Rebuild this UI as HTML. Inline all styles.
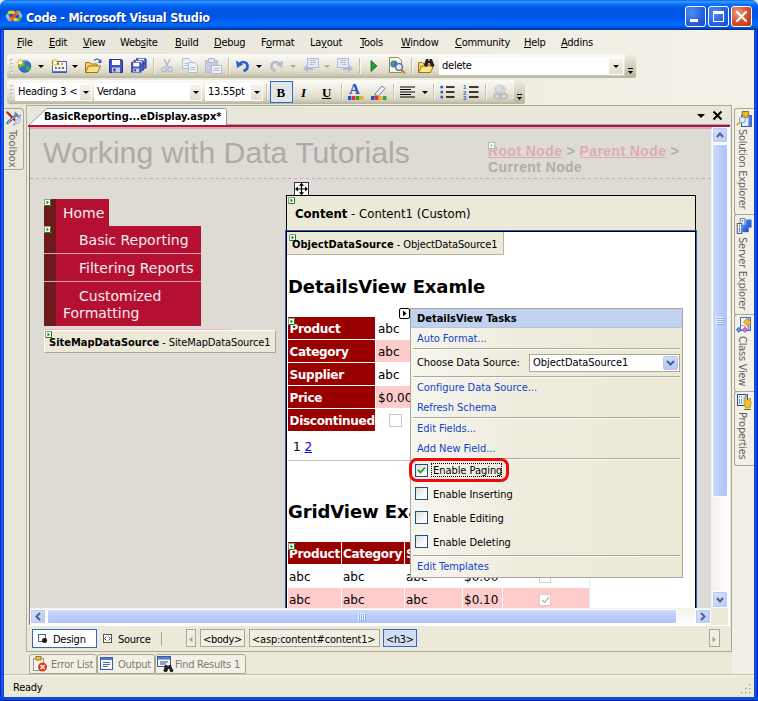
<!DOCTYPE html>
<html><head><meta charset="utf-8"><title>Code - Microsoft Visual Studio</title>
<style>
*{box-sizing:border-box}
html,body{margin:0;padding:0}
body{width:758px;height:701px;position:relative;overflow:hidden;background:#ece9d8;font:11px "DejaVu Sans Condensed","Liberation Sans",sans-serif;color:#000}
.a{position:absolute}
.t{position:absolute;white-space:pre;line-height:14px;letter-spacing:-0.25px}
.p{letter-spacing:-0.05px}
.vd{font-family:"DejaVu Sans","Liberation Sans",sans-serif}
.ar{font-family:"Liberation Sans",sans-serif}
u{text-decoration:underline}
/* title */
#title{left:0;top:0;width:758px;height:30px;border-radius:6px 6px 0 0;background:linear-gradient(to bottom,#0058e6 0%,#3a93ff 4%,#288eff 8%,#127dff 12%,#036ffc 16%,#0262ee 22%,#0057e5 30%,#0054e3 40%,#0055eb 56%,#005bf5 66%,#026afe 78%,#0062ef 86%,#0052d6 92%,#0040ab 96%,#003092 100%)}
#bl{left:0;top:30px;width:4px;height:671px;background:linear-gradient(to right,#0019cf,#0831d9 25%,#166aee 50%,#0855dd 75%,#0048dd)}
#br{left:754px;top:30px;width:4px;height:671px;background:linear-gradient(to right,#0048dd,#0855dd 25%,#0650d8 50%,#0831d9 75%,#00138c)}
#bb{left:0;top:697px;width:758px;height:4px;background:linear-gradient(to bottom,#0048dd,#0855dd 25%,#0650d8 50%,#0831d9 75%,#00138c)}
.cb{position:absolute;top:6px;width:21px;height:21px;border:1px solid #fff;border-radius:3px;background:radial-gradient(circle at 30% 30%,#4f8ff5 0%,#2b62e0 55%,#1a48c8 100%)}
#menubar{left:4px;top:30px;width:750px;height:76px;background:linear-gradient(to right,#e7e5d8,#f4f2e8)}
.tb{position:absolute;height:24px;border-radius:3px 3px 3px 3px;background:linear-gradient(to bottom,#fbfaf6 0%,#f0eee3 35%,#dddac8 75%,#c6c4ae 92%,#b3b19c 100%)}
.grip{position:absolute;left:3px;top:5px;width:3px;height:15px;background:repeating-linear-gradient(to bottom,#c1beaa 0,#c1beaa 2px,transparent 2px,transparent 4px)}
.grip:after{content:"";position:absolute;left:1px;top:1px;width:2px;height:15px;background:repeating-linear-gradient(to bottom,#fff 0,#fff 1px,transparent 1px,transparent 4px);opacity:.9}
.sep{position:absolute;width:1px;height:16px;background:#c2bfad;box-shadow:1px 0 0 rgba(255,255,255,.7)}
.combo{position:absolute;background:#fff;height:18px}
.dd{position:absolute;width:0;height:0;border-left:3px solid transparent;border-right:3px solid transparent;border-top:3px solid #000}
</style></head><body>
<!-- window chrome -->
<div class="a" id="title"></div>
<div class="a" id="bl"></div><div class="a" id="br"></div><div class="a" id="bb"></div>
<div class="t" style="left:26px;top:9px;font:bold 12.500px 'DejaVu Sans Condensed','Liberation Sans',sans-serif;color:#fff;text-shadow:1px 1px 0 #0a2a8a;line-height:17px;letter-spacing:-0.250px">Code - Microsoft Visual Studio</div>
<div class="a" id="menubar"></div>
<div class="t" style="left:17px;top:36px"><u>F</u>ile</div>
<div class="t" style="left:49px;top:36px"><u>E</u>dit</div>
<div class="t" style="left:83px;top:36px"><u>V</u>iew</div>
<div class="t" style="left:120px;top:36px">Web<u>s</u>ite</div>
<div class="t" style="left:175px;top:36px"><u>B</u>uild</div>
<div class="t" style="left:214px;top:36px"><u>D</u>ebug</div>
<div class="t" style="left:261px;top:36px">F<u>o</u>rmat</div>
<div class="t" style="left:310px;top:36px">La<u>y</u>out</div>
<div class="t" style="left:360px;top:36px"><u>T</u>ools</div>
<div class="t" style="left:401px;top:36px"><u>W</u>indow</div>
<div class="t" style="left:455px;top:36px"><u>C</u>ommunity</div>
<div class="t" style="left:524px;top:36px"><u>H</u>elp</div>
<div class="t" style="left:561px;top:36px"><u>A</u>ddins</div>
<div class="cb" style="left:685px"><div class="a" style="left:4px;top:12px;width:8px;height:3px;background:#fff"></div></div>
<div class="cb" style="left:708px"><div class="a" style="left:4px;top:4px;width:11px;height:11px;border:1px solid #fff;border-top-width:3px"></div></div>
<div class="cb" style="left:731px;background:radial-gradient(circle at 30% 30%,#f0a080 0%,#d8502c 50%,#b8340e 100%)"><svg class="a" style="left:3px;top:3px" width="13" height="13" viewBox="0 0 13 13"><path d="M2 2L11 11M11 2L2 11" stroke="#fff" stroke-width="2.2" stroke-linecap="round"/></svg></div>
<svg class="a" style="left:5px;top:10px" width="18" height="12" viewBox="5 10 18 12"><defs><linearGradient id="vx" x1="0" y1="1" x2="1" y2="0"><stop offset="0" stop-color="#f2801c"/><stop offset="0.5" stop-color="#e6401e"/><stop offset="1" stop-color="#f07a20"/></linearGradient></defs><g fill="none" stroke-linecap="round" stroke-width="3"><path d="M7.200 16L9.400 12.400" stroke="#62ae30"/><path d="M7.200 16L9.400 19.600" stroke="#9cc4e6"/><path d="M9.600 12.300H13.200L14.300 14" stroke="#f8cf20"/><path d="M18.600 19.700H15L13.900 18" stroke="#f8cf20"/><path d="M18.800 19.600L20.900 16" stroke="#62ae30"/><path d="M18.800 12.400L20.900 16" stroke="#86bce6"/><path d="M10.600 19.600L17.400 12.400" stroke="url(#vx)" stroke-width="3.400"/></g></svg>
<div class="tb" style="left:7px;top:54px;width:629px"><div class="grip"></div></div>
<div class="a" style="left:625px;top:54px;width:11px;height:24px;border-radius:0 3px 3px 0;background:linear-gradient(to bottom,#f0eee2,#b5b39c)"></div>
<svg class="a" style="left:627px;top:68px" width="7" height="7" viewBox="0 0 7 7"><path d="M1 0.5h5" stroke="#000" stroke-width="1"/><path d="M1 3h5L3.5 6z" fill="#000"/><path d="M2 1.5h5" stroke="#fff" stroke-width="0" /></svg>
<svg class="a" style="left:14px;top:56px" width="19" height="18" viewBox="0 0 19 18"><circle cx="10.800" cy="10.300" r="6.200" fill="#2f6fd6"/><circle cx="10.800" cy="10.300" r="6" fill="none" stroke="#1f4fa8" stroke-width="0.800"/><path d="M7 6.500c2-.5 3.500.5 4 2s-1 2.500-2.500 2.500-1 2.500-2.500 2-1.500-5 1-6.500zM13 9.500c1.500 0 2.500 1 3.500 2-.5 2-1.500 3-3.500 4 0-2-1.500-3-1-4.500z" fill="#3fae3a"/><path d="M9 5c1.500-.800 4-.800 5.500.800" stroke="#a8ccf8" stroke-width="1" fill="none"/><g transform="translate(2.5,2.5)"><path d="M4 0v8M0 4h8M1.200 1.200l5.600 5.600M6.800 1.200L1.200 6.800" stroke="#f0c020" stroke-width="1.200"/><rect x="2.500" y="2.500" width="3" height="3" fill="#fffbe0"/></g></svg>
<div class="dd" style="left:38px;top:65px"></div>
<svg class="a" style="left:48px;top:56px" width="20" height="18" viewBox="0 0 20 18"><rect x="4.500" y="5.500" width="14" height="11" fill="#f6f8fc" stroke="#4a6ab8"/><path d="M4.500 16h14" stroke="#3a5aa8" stroke-width="1.600"/><rect x="9" y="7" width="2" height="2" fill="#6a5ad8"/><rect x="13" y="7" width="2" height="2" fill="#f09a20"/><rect x="7" y="11" width="2" height="2" fill="#2a8ae0"/><rect x="10.500" y="11" width="2" height="2" fill="#e03a2a"/><rect x="14" y="11" width="2" height="2" fill="#2a9a3a"/><g transform="translate(3,2.5)"><path d="M4 0v8M0 4h8M1.200 1.200l5.600 5.600M6.800 1.200L1.200 6.800" stroke="#f0c020" stroke-width="1.200"/><rect x="2.500" y="2.500" width="3" height="3" fill="#fffbe0"/></g></svg>
<div class="dd" style="left:72px;top:65px"></div>
<svg class="a" style="left:84px;top:57px" width="18" height="17" viewBox="0 0 18 17"><path d="M1.5 15.5v-10h4l1.5 1.5h6v2" fill="#f5d36a" stroke="#9a7410"/><path d="M1.5 15.5l3-6.5h12l-3 6.5z" fill="#fbe28a" stroke="#9a7410"/><path d="M10 3.5c2-2 5-2 6 1" fill="none" stroke="#3a66c8" stroke-width="1.4"/><path d="M17.5 2v4h-4z" fill="#3a66c8"/></svg>
<svg class="a" style="left:109px;top:59px" width="14" height="14" viewBox="0 0 14 14"><path d="M0.5 0.5h12l1 1v12h-13z" fill="#3f55c8" stroke="#27348a"/><rect x="3" y="1" width="8" height="5" fill="#fff"/><rect x="3" y="8.5" width="8" height="5" fill="#c9cee6"/><rect x="4.5" y="9.5" width="2" height="3" fill="#27348a"/></svg>
<svg class="a" style="left:131px;top:58px" width="16" height="15" viewBox="0 0 16 15"><g transform="translate(5,0) scale(0.75)"><path d="M0.5 0.5h12l1 1v12h-13z" fill="#3f55c8" stroke="#27348a"/><rect x="3" y="1" width="8" height="5" fill="#fff"/><rect x="3" y="8.5" width="8" height="5" fill="#c9cee6"/><rect x="4.5" y="9.5" width="2" height="3" fill="#27348a"/></g><g transform="translate(2.5,2) scale(0.75)"><path d="M0.5 0.5h12l1 1v12h-13z" fill="#3f55c8" stroke="#27348a"/><rect x="3" y="1" width="8" height="5" fill="#fff"/><rect x="3" y="8.5" width="8" height="5" fill="#c9cee6"/><rect x="4.5" y="9.5" width="2" height="3" fill="#27348a"/></g><g transform="translate(0,4) scale(0.75)"><path d="M0.5 0.5h12l1 1v12h-13z" fill="#3f55c8" stroke="#27348a"/><rect x="3" y="1" width="8" height="5" fill="#fff"/><rect x="3" y="8.5" width="8" height="5" fill="#c9cee6"/><rect x="4.5" y="9.5" width="2" height="3" fill="#27348a"/></g></svg>
<div class="sep" style="left:153px;top:58px"></div>
<svg class="a" style="left:161px;top:59px" width="12" height="14" viewBox="0 0 12 14"><path d="M3 0l4 8M9 0L5 8" stroke="#b3bcd2" stroke-width="1.6" fill="none"/><circle cx="3" cy="10.5" r="2.2" fill="none" stroke="#b3bcd2" stroke-width="1.5"/><circle cx="9" cy="10.5" r="2.2" fill="none" stroke="#b3bcd2" stroke-width="1.5"/></svg>
<svg class="a" style="left:182px;top:58px" width="17" height="15" viewBox="0 0 17 15"><path d="M0.5 0.5h6l3 3v7h-9z" fill="#eef1f8" stroke="#b3bcd2"/><path d="M2.5 5.5h5M2.5 7.5h5" stroke="#b3bcd2"/><path d="M6.5 4.5h6l3 3v7h-9z" fill="#eef1f8" stroke="#b3bcd2"/><path d="M8.5 9.5h5M8.5 11.5h5" stroke="#b3bcd2"/></svg>
<svg class="a" style="left:205px;top:58px" width="17" height="16" viewBox="0 0 17 16"><rect x="0.5" y="2.5" width="12" height="12" fill="#c5cde0" stroke="#b3bcd2"/><rect x="3.5" y="0.5" width="6" height="4" fill="#dfe4f0" stroke="#b3bcd2"/><rect x="6.5" y="7.5" width="10" height="8" fill="#eef1f8" stroke="#b3bcd2"/><path d="M8.5 10.5h6M8.5 12.5h6" stroke="#b3bcd2"/></svg>
<div class="sep" style="left:228px;top:58px"></div>
<svg class="a" style="left:236px;top:59px" width="14" height="13" viewBox="0 0 14 13"><path d="M3 5.5c3-4 9-3 8.5 2.5-.3 2.5-2 3.5-4 4" fill="none" stroke="#2f5fd0" stroke-width="2.6"/><path d="M0 1.5l1 7.5 6-3.5z" fill="#2f5fd0"/></svg>
<div class="dd" style="left:256px;top:65px"></div>
<svg class="a" style="left:269px;top:59px" width="14" height="13" viewBox="0 0 14 13"><g transform="translate(14,0) scale(-1,1)"><path d="M3 5.5c3-4 9-3 8.5 2.5-.3 2.5-2 3.5-4 4" fill="none" stroke="#b3bcd2" stroke-width="2.6"/><path d="M0 1.5l1 7.5 6-3.5z" fill="#b3bcd2"/></g></svg>
<div class="dd" style="left:290px;top:65px;border-top-color:#aca899"></div>
<svg class="a" style="left:303px;top:58px" width="17" height="16" viewBox="0 0 17 16"><rect x="4.5" y="0.5" width="11" height="9" fill="#e6eaf4" stroke="#b3bcd2"/><path d="M7 2.500h6M7 4.500h6M7 6.500h4" stroke="#b3bcd2"/><path d="M0 10.5l5-4.5v3h5v3h-5v3z" fill="#b3bcd2"/></svg>
<div class="dd" style="left:324px;top:65px;border-top-color:#aca899"></div>
<svg class="a" style="left:336px;top:58px" width="17" height="16" viewBox="0 0 17 16"><g transform="translate(17,0) scale(-1,1)"><rect x="4.5" y="0.5" width="11" height="9" fill="#e6eaf4" stroke="#b3bcd2"/><path d="M7 2.500h6M7 4.500h6M7 6.500h4" stroke="#b3bcd2"/><path d="M0 10.5l5-4.5v3h5v3h-5v3z" fill="#b3bcd2"/></g></svg>
<div class="sep" style="left:359px;top:58px"></div>
<svg class="a" style="left:370px;top:60px" width="8" height="12" viewBox="0 0 8 12"><path d="M1 0.500l6 5.500-6 5.500z" fill="#2a9a2a" stroke="#1a6a1a" stroke-width="0.800"/></svg>
<svg class="a" style="left:388px;top:57px" width="18" height="18" viewBox="0 0 18 18"><path d="M1.5 0.5h9l3 3v12h-12z" fill="#fdf8d8" stroke="#8a8a6a"/><circle cx="6" cy="7" r="3.6" fill="#3a76d8"/><path d="M4 5c2 0 3 1 2 3s-2 1-2-3z" fill="#4ab04a"/><circle cx="11" cy="10" r="3.3" fill="#dff0ff" stroke="#4a6aa8" stroke-width="1.3"/><path d="M13.5 12.5l3.5 4" stroke="#c88a2a" stroke-width="2.2"/></svg>
<div class="sep" style="left:411px;top:58px"></div>
<svg class="a" style="left:417px;top:57px" width="18" height="17" viewBox="0 0 18 17"><path d="M1.5 15.5v-10h4l1.5 1.5h6v2" fill="#f5d36a" stroke="#9a7410"/><path d="M1.5 15.5l3-6.5h12l-3 6.5z" fill="#fbe28a" stroke="#9a7410"/><path d="M9 2h2.5v2h1V2H15l2 6h-3.5l-.5-2h-2l-.5 2H7z" fill="#222"/><circle cx="9" cy="8" r="1.8" fill="#222"/><circle cx="15.5" cy="8" r="1.8" fill="#222"/></svg>
<div class="combo" style="left:439px;top:57px;width:185px"></div>
<div class="a" style="left:609px;top:58px;width:14px;height:16px;background:linear-gradient(to bottom,#f7f6f0,#e0ddcc)"></div>
<div class="dd" style="left:613px;top:65px"></div>
<div class="t" style="left:442px;top:59px">delete</div>
<!-- toolbar 2 -->
<div class="tb" style="left:7px;top:80px;width:518px"><div class="grip"></div></div>
<div class="a" style="left:514px;top:80px;width:11px;height:24px;border-radius:0 3px 3px 0;background:linear-gradient(to bottom,#f0eee2,#b5b39c)"></div>
<svg class="a" style="left:516px;top:94px" width="7" height="7" viewBox="0 0 7 7"><path d="M1 0.5h5" stroke="#000" stroke-width="1"/><path d="M1 3h5L3.5 6z" fill="#000"/></svg>
<div class="combo" style="left:15px;top:83px;width:77px"></div>
<div class="a" style="left:80px;top:84px;width:11px;height:16px;background:linear-gradient(to bottom,#f7f6f0,#e0ddcc)"></div>
<div class="dd" style="left:83px;top:91px"></div>
<div class="t" style="left:18px;top:85px">Heading 3 &lt;</div>
<div class="combo" style="left:94px;top:83px;width:108px"></div>
<div class="a" style="left:190px;top:84px;width:11px;height:16px;background:linear-gradient(to bottom,#f7f6f0,#e0ddcc)"></div>
<div class="dd" style="left:193px;top:91px"></div>
<div class="t" style="left:97px;top:85px">Verdana</div>
<div class="combo" style="left:205px;top:83px;width:58px"></div>
<div class="a" style="left:251px;top:84px;width:11px;height:16px;background:linear-gradient(to bottom,#f7f6f0,#e0ddcc)"></div>
<div class="dd" style="left:254px;top:91px"></div>
<div class="t" style="left:208px;top:85px">13.55pt</div>
<div class="sep" style="left:266px;top:84px"></div>
<div class="a" style="left:270px;top:81px;width:23px;height:22px;border:1px solid #316ac5;background:#e1e6e8"></div>
<div class="t" style="left:276.500px;top:84px;font:bold 13px 'Liberation Serif',serif;line-height:17px">B</div>
<div class="t" style="left:301px;top:84px;font:italic bold 13px 'Liberation Serif',serif;line-height:17px">I</div>
<div class="t" style="left:322px;top:84px;font:bold 13px 'Liberation Serif',serif;line-height:17px;text-decoration:underline">U</div>
<div class="sep" style="left:341px;top:84px"></div>
<div class="t" style="left:349px;top:80px;font:bold 15px 'Liberation Serif',serif;line-height:18px;color:#2a4fc0">A</div>
<svg class="a" style="left:348px;top:84px" width="16" height="16" viewBox="0 0 16 16"><rect x="0" y="12" width="3.4" height="4" fill="#2a4fc0"/><rect x="4" y="12" width="3.4" height="4" fill="#e03030"/><rect x="8" y="12" width="3.4" height="4" fill="#30a030"/><rect x="12" y="12" width="3.4" height="4" fill="#f0b020"/></svg>
<svg class="a" style="left:371px;top:84px" width="16" height="16" viewBox="0 0 16 16"><path d="M4 10l7-8 3 2.5-7 8z" fill="#f4f4f8" stroke="#6a7ab0" stroke-width="1"/><path d="M4 10l3 2.5-4 1z" fill="#e8c020" stroke="#8a7a30" stroke-width="0.6"/><rect x="0" y="12" width="3.4" height="4" fill="#2a4fc0"/><rect x="4" y="12" width="3.4" height="4" fill="#e03030"/><rect x="8" y="12" width="3.4" height="4" fill="#f0b020"/><rect x="12" y="12" width="3.4" height="4" fill="#30a030"/></svg>
<div class="sep" style="left:393px;top:84px"></div>
<svg class="a" style="left:400px;top:86px" width="16" height="12" viewBox="0 0 16 12"><path d="M0 1h15M0 3.5h11M0 6h15M0 8.5h11M0 11h15" stroke="#000" stroke-width="1.2"/></svg>
<div class="dd" style="left:422px;top:91px"></div>
<div class="sep" style="left:433px;top:84px"></div>
<svg class="a" style="left:440px;top:85px" width="15" height="14" viewBox="0 0 15 14"><circle cx="1.8" cy="2" r="1.6" fill="#2f5fd0"/><circle cx="1.8" cy="7" r="1.6" fill="#2f5fd0"/><circle cx="1.8" cy="12" r="1.6" fill="#2f5fd0"/><path d="M6 2h8.5M6 7h8.5M6 12h8.5" stroke="#000" stroke-width="1.3"/></svg>
<svg class="a" style="left:463px;top:84px" width="17" height="16" viewBox="0 0 17 16"><text x="0" y="5" font-family="Liberation Sans" font-size="6" font-weight="bold" fill="#2f5fd0">1</text><text x="0" y="10.5" font-family="Liberation Sans" font-size="6" font-weight="bold" fill="#2f5fd0">2</text><text x="0" y="16" font-family="Liberation Sans" font-size="6" font-weight="bold" fill="#2f5fd0">3</text><path d="M6 3h9.5M6 8h9.5M6 13h9.5" stroke="#000" stroke-width="1.3"/></svg>
<div class="sep" style="left:485px;top:84px"></div>
<svg class="a" style="left:492px;top:84px" width="18" height="17" viewBox="0 0 18 17"><circle cx="8" cy="6.5" r="6" fill="#cfd2d9"/><circle cx="6.5" cy="4.5" r="2.5" fill="#dcdfe6"/><rect x="2" y="10" width="7" height="4.5" rx="2" fill="none" stroke="#b6bac4" stroke-width="1.6"/><rect x="8" y="10" width="7" height="4.5" rx="2" fill="none" stroke="#b6bac4" stroke-width="1.6"/></svg>
<!-- document frame -->
<div class="a" style="left:4px;top:108px;width:20px;height:62px;background:#eae9dc;border:1px solid #aca899;border-left:none;border-radius:0 4px 3px 0"></div>
<svg class="a" style="left:6px;top:111px" width="16" height="16" viewBox="0 0 16 16"><path d="M1.400 1.400L8.600 9" stroke="#c41c1c" stroke-width="2.200" stroke-linecap="round"/><path d="M1.800 11.800L10.600 3.800" stroke="#3a5688" stroke-width="2.600" stroke-linecap="round"/><path d="M1.800 11.800L10.600 3.800" stroke="#fff" stroke-width="1.100" stroke-dasharray="1.200 0.800"/><path d="M10 1.200a2.600 2.600 0 1 0 4.400 2.400" fill="none" stroke="#6f8cc2" stroke-width="1.700"/><path d="M9.600 9.500l3-1.500 1.200-2.500 .600 3-1.600 3.500-2.800 1z" fill="#d8def0" stroke="#94a4cc" stroke-width="0.800"/><path d="M7 14.500l2.600-2.200" stroke="#8ea2d0" stroke-width="1.600"/></svg>
<div class="t" style="left:19px;top:130px;transform-origin:0 0;transform:rotate(90deg);font-size:11px;color:#6a6a6a;letter-spacing:0.1px">Toolbox</div>
<div class="a" style="left:27px;top:106px;width:705px;height:19px;background:#e9e7da"></div>
<svg class="a" style="left:28px;top:108px" width="200" height="18" viewBox="0 0 200 18"><path d="M0.500 17.500L17.500 1.500Q18.500 0.500 20 0.500H196.500Q198.500 0.500 198.500 2.500V17.500" fill="#fff" stroke="#7f9db9"/></svg>
<div class="t" style="left:44px;top:110px;font-weight:bold;letter-spacing:0">BasicReporting...eDisplay.aspx*</div>
<div class="dd" style="left:697px;top:114px;border-width:4px 4px 0 4px"></div>
<svg class="a" style="left:712px;top:110px" width="11" height="11" viewBox="0 0 11 11"><path d="M1.500 1.500l8 8M9.500 1.500l-8 8" stroke="#000" stroke-width="2"/></svg>
<div class="a" style="left:227px;top:124px;width:503px;height:1px;background:#8fa9c6"></div>
<div class="a" style="left:28px;top:125px;width:702px;height:2px;background:#b5123a"></div>
<div class="a" style="left:30px;top:127px;width:682px;height:2px;background:#dbadb1;z-index:1"></div>
<div class="a" id="page" style="left:28px;top:128px;width:684px;height:481px;background:#dddbd4;border-left:1px solid #f0eee3;overflow:hidden">
<div class="t ar" style="left:14px;top:6px;font-size:30.200px;line-height:37px;color:#aeaba4;letter-spacing:0">Working with Data Tutorials</div>
<div class="t ar" style="left:459px;top:15px;font-size:14px;font-weight:bold;line-height:16px;color:#b1aea7;letter-spacing:0.4px"><span style="color:#dfacb3;text-decoration:underline">Root Node</span> &gt; <span style="color:#dfacb3;text-decoration:underline">Parent Node</span> &gt;
Current Node</div>
<svg class="a" style="left:459px;top:14px" width="7" height="7" viewBox="0 0 7 7"><rect x="0.5" y="0.5" width="6" height="6" fill="#fff" stroke="#9ac89a"/><path d="M2.500 1.500l2.500 2-2.500 2z" fill="#9ac89a"/></svg>
<div class="a" style="left:0px;top:50px;width:684px;height:1px;background:repeating-linear-gradient(to right,#dba5af 0,#dba5af 3px,transparent 3px,transparent 6px);background-position:1px 0"></div>
<div class="a" style="left:15px;top:71px;width:65px;height:27px;background:#b51032"></div>
<div class="a" style="left:15px;top:98px;width:157px;height:100px;background:#b51032"></div>
<div class="a" style="left:15px;top:71px;width:12px;height:127px;background:#6e1a1c"></div>
<div class="a" style="left:15px;top:125px;width:157px;height:1px;background:#e6a3ab"></div>
<div class="a" style="left:15px;top:153px;width:157px;height:1px;background:#e6a3ab"></div>
<div class="t vd" style="left:34px;top:77px;font-size:14px;line-height:17px;color:#f4eef0;letter-spacing:0">Home</div>
<div class="t vd" style="left:50px;top:104px;font-size:14px;line-height:17px;color:#f4eef0;letter-spacing:0">Basic Reporting</div>
<div class="t vd" style="left:50px;top:132px;font-size:14px;line-height:17px;color:#f4eef0;letter-spacing:0">Filtering Reports</div>
<div class="t vd" style="left:50px;top:160px;font-size:14px;line-height:17px;color:#f4eef0;letter-spacing:0">Customized</div>
<div class="t vd" style="left:34px;top:177px;font-size:14px;line-height:17px;color:#f4eef0;letter-spacing:0">Formatting</div>
<svg class="a" style="left:15px;top:71px" width="7" height="7" viewBox="0 0 7 7"><rect width="7" height="7" fill="#fff"/><path d="M0.500 7V0.500H7" fill="none" stroke="#8c9a8c"/><path d="M1 6.500H6.500V1" fill="none" stroke="#0a8a0a"/><path d="M2.500 1.500l2.500 2-2.500 2z" fill="#0a8a0a"/></svg>
<svg class="a" style="left:15px;top:98px" width="7" height="7" viewBox="0 0 7 7"><rect width="7" height="7" fill="#fff"/><path d="M0.500 7V0.500H7" fill="none" stroke="#8c9a8c"/><path d="M1 6.500H6.500V1" fill="none" stroke="#0a8a0a"/><path d="M2.500 1.500l2.500 2-2.500 2z" fill="#0a8a0a"/></svg>
<div class="a" style="left:15px;top:201px;width:187px;height:1px;background:#f2b8c0"></div>
<div class="a" style="left:15px;top:202px;width:232px;height:23px;background:#ece9d8;border:1px solid #aca899;border-top-color:#fff;border-left-color:#fff"></div>
<div class="t" style="left:20px;top:208px;letter-spacing:0"><b>SiteMapDataSource</b><span style="letter-spacing:-0.12px"> - SiteMapDataSource1</span></div>
<svg class="a" style="left:16px;top:203px" width="7" height="7" viewBox="0 0 7 7"><rect width="7" height="7" fill="#fff"/><path d="M0.500 7V0.500H7" fill="none" stroke="#8c9a8c"/><path d="M1 6.500H6.500V1" fill="none" stroke="#0a8a0a"/><path d="M2.500 1.500l2.500 2-2.500 2z" fill="#0a8a0a"/></svg>
<!-- content placeholder -->
<svg class="a" style="left:265px;top:54px" width="15" height="14" viewBox="0 0 15 14"><rect x="0.5" y="0.5" width="14" height="13" fill="#fff" stroke="#333"/><path d="M7.500 2v10M2 7h11" stroke="#000" stroke-width="1.200"/><path d="M7.500 0.800l2.600 3h-5.200zM7.500 13.200l2.600-3h-5.200zM1 7l3-2.600v5.200zM14 7l-3-2.600v5.200z" fill="#000"/></svg>
<div class="a" style="left:257px;top:67px;width:410px;height:35px;background:#ece9d8;border:1px solid #000;border-bottom:none"></div>
<svg class="a" style="left:259px;top:69px" width="7" height="7" viewBox="0 0 7 7"><rect width="7" height="7" fill="#fff"/><path d="M0.500 7V0.500H7" fill="none" stroke="#8c9a8c"/><path d="M1 6.500H6.500V1" fill="none" stroke="#0a8a0a"/><path d="M2.500 1.500l2.500 2-2.500 2z" fill="#0a8a0a"/></svg>
<div class="t" style="left:266px;top:78px;font-size:13px;line-height:16px;letter-spacing:0"><b>Content</b> - Content1 (Custom)</div>
<div class="a" style="left:256px;top:102px;width:412px;height:400px;background:#fff;border:1px solid #2a58c4"></div>
<div class="a" style="left:257px;top:103px;width:410px;height:400px;border:1px solid #000;border-bottom:none"></div>
<div class="a" style="left:258px;top:104px;width:217px;height:23px;background:#ece9d8;border:1px solid #b8b5a5;border-left:none;border-top:none"></div>
<svg class="a" style="left:260px;top:106px" width="7" height="7" viewBox="0 0 7 7"><rect width="7" height="7" fill="#fff"/><path d="M0.500 7V0.500H7" fill="none" stroke="#8c9a8c"/><path d="M1 6.500H6.500V1" fill="none" stroke="#0a8a0a"/><path d="M2.500 1.500l2.500 2-2.500 2z" fill="#0a8a0a"/></svg>
<div class="t" style="left:263px;top:110px;letter-spacing:0.05px"><b>ObjectDataSource</b><span style="letter-spacing:-0.12px"> - ObjectDataSource1</span></div>
<div class="t vd" style="left:259px;top:148px;font-size:18px;font-weight:bold;line-height:22px;letter-spacing:-0.1px">DetailsView Examle</div>
<div class="t vd" style="left:259px;top:373px;font-size:18px;font-weight:bold;line-height:22px;letter-spacing:-0.1px">GridView Example</div>
<div class="a" style="left:259px;top:189px;width:87px;height:22px;background:#990000"></div>
<div class="a" style="left:347px;top:189px;width:40px;height:22px;background:#fff"></div>
<div class="t vd" style="left:260.5px;top:193px;font-size:12px;font-weight:bold;color:#fff;line-height:16px;letter-spacing:-0.3px">Product</div>
<div class="t vd" style="left:349.0px;top:193px;font-size:12px;line-height:16px;letter-spacing:0">abc</div>
<div class="a" style="left:259px;top:212px;width:87px;height:22px;background:#990000"></div>
<div class="a" style="left:347px;top:212px;width:40px;height:22px;background:#ffcccc"></div>
<div class="t vd" style="left:260.5px;top:216px;font-size:12px;font-weight:bold;color:#fff;line-height:16px;letter-spacing:-0.3px">Category</div>
<div class="t vd" style="left:349.0px;top:216px;font-size:12px;line-height:16px;letter-spacing:0">abc</div>
<div class="a" style="left:259px;top:235px;width:87px;height:22px;background:#990000"></div>
<div class="a" style="left:347px;top:235px;width:40px;height:22px;background:#fff"></div>
<div class="t vd" style="left:260.5px;top:239px;font-size:12px;font-weight:bold;color:#fff;line-height:16px;letter-spacing:-0.3px">Supplier</div>
<div class="t vd" style="left:349.0px;top:239px;font-size:12px;line-height:16px;letter-spacing:0">abc</div>
<div class="a" style="left:259px;top:258px;width:87px;height:22px;background:#990000"></div>
<div class="a" style="left:347px;top:258px;width:40px;height:22px;background:#ffcccc"></div>
<div class="t vd" style="left:260.5px;top:262px;font-size:12px;font-weight:bold;color:#fff;line-height:16px;letter-spacing:-0.3px">Price</div>
<div class="t vd" style="left:349.0px;top:262px;font-size:12px;line-height:16px;letter-spacing:0">$0.00</div>
<div class="a" style="left:259px;top:281px;width:87px;height:22px;background:#990000"></div>
<div class="a" style="left:347px;top:281px;width:40px;height:22px;background:#fff"></div>
<div class="t vd" style="left:260.5px;top:285px;font-size:12px;font-weight:bold;color:#fff;line-height:16px;letter-spacing:-0.3px">Discontinued</div>
<div class="a" style="left:360px;top:286px;width:13px;height:13px;background:#fff;border:1px solid #c8c8c0"></div>
<svg class="a" style="left:259px;top:190px" width="7" height="7" viewBox="0 0 7 7"><rect width="7" height="7" fill="#fff"/><path d="M0.500 7V0.500H7" fill="none" stroke="#8c9a8c"/><path d="M1 6.500H6.500V1" fill="none" stroke="#0a8a0a"/><path d="M2.500 1.500l2.500 2-2.500 2z" fill="#0a8a0a"/></svg>
<div class="t vd" style="left:264px;top:311px;font-size:12px;line-height:16px;letter-spacing:0">1 <span style="color:#0000ee;text-decoration:underline">2</span></div>
<div class="a" style="left:259px;top:332px;width:125px;height:1px;background:#c0c0c0"></div>
<!-- gridview -->
<div class="a" style="left:259px;top:414px;width:53px;height:22px;background:#990000"></div>
<div class="t vd" style="left:260px;top:418px;font-size:12px;font-weight:bold;color:#fff;line-height:16px;letter-spacing:-0.3px">Product</div>
<div class="a" style="left:313px;top:414px;width:62px;height:22px;background:#990000"></div>
<div class="t vd" style="left:314px;top:418px;font-size:12px;font-weight:bold;color:#fff;line-height:16px;letter-spacing:-0.3px">Category</div>
<div class="a" style="left:376px;top:414px;width:57px;height:22px;background:#990000"></div>
<div class="t vd" style="left:377px;top:418px;font-size:12px;font-weight:bold;color:#fff;line-height:16px;letter-spacing:-0.3px">Supplier</div>
<div class="a" style="left:434px;top:414px;width:39px;height:22px;background:#990000"></div>
<div class="t vd" style="left:435px;top:418px;font-size:12px;font-weight:bold;color:#fff;line-height:16px;letter-spacing:-0.3px">Price</div>
<div class="a" style="left:474px;top:414px;width:86px;height:22px;background:#990000"></div>
<div class="a" style="left:259px;top:437px;width:53px;height:22px;background:#fff"></div>
<div class="t vd" style="left:260px;top:441px;font-size:12px;line-height:16px;letter-spacing:0">abc</div>
<div class="a" style="left:313px;top:437px;width:62px;height:22px;background:#fff"></div>
<div class="t vd" style="left:314px;top:441px;font-size:12px;line-height:16px;letter-spacing:0">abc</div>
<div class="a" style="left:376px;top:437px;width:57px;height:22px;background:#fff"></div>
<div class="t vd" style="left:377px;top:441px;font-size:12px;line-height:16px;letter-spacing:0">abc</div>
<div class="a" style="left:434px;top:437px;width:39px;height:22px;background:#fff"></div>
<div class="t vd" style="left:435px;top:441px;font-size:12px;line-height:16px;letter-spacing:0">$0.00</div>
<div class="a" style="left:474px;top:437px;width:86px;height:22px;background:#fff"></div>
<div class="a" style="left:259px;top:460px;width:53px;height:22px;background:#ffcccc"></div>
<div class="t vd" style="left:260px;top:464px;font-size:12px;line-height:16px;letter-spacing:0">abc</div>
<div class="a" style="left:313px;top:460px;width:62px;height:22px;background:#ffcccc"></div>
<div class="t vd" style="left:314px;top:464px;font-size:12px;line-height:16px;letter-spacing:0">abc</div>
<div class="a" style="left:376px;top:460px;width:57px;height:22px;background:#ffcccc"></div>
<div class="t vd" style="left:377px;top:464px;font-size:12px;line-height:16px;letter-spacing:0">abc</div>
<div class="a" style="left:434px;top:460px;width:39px;height:22px;background:#ffcccc"></div>
<div class="t vd" style="left:435px;top:464px;font-size:12px;line-height:16px;letter-spacing:0">$0.10</div>
<div class="a" style="left:474px;top:460px;width:86px;height:22px;background:#ffcccc"></div>
<div class="a" style="left:258px;top:414px;width:303px;height:70px;border:1px solid #e8e8e8;border-width:0 1px 0 0"></div>
<div class="a" style="left:510px;top:443px;width:12px;height:12px;background:#fff;border:1px solid #d0d0c8"></div>
<div class="a" style="left:510px;top:466px;width:12px;height:12px;background:#fff;border:1px solid #d0d0c8"></div>
<svg class="a" style="left:512px;top:468px" width="9" height="9" viewBox="0 0 9 9"><path d="M1 4l2.500 2.500L8 1.500" fill="none" stroke="#b8b8b0" stroke-width="1.4"/></svg>
<svg class="a" style="left:259px;top:415px" width="7" height="7" viewBox="0 0 7 7"><rect width="7" height="7" fill="#fff"/><path d="M0.500 7V0.500H7" fill="none" stroke="#8c9a8c"/><path d="M1 6.500H6.500V1" fill="none" stroke="#0a8a0a"/><path d="M2.500 1.500l2.500 2-2.500 2z" fill="#0a8a0a"/></svg>
<!-- tasks panel -->
<svg class="a" style="left:370px;top:180px" width="11" height="11" viewBox="0 0 11 11"><rect x="0.5" y="0.5" width="10" height="10" rx="1.500" fill="#fff" stroke="#000"/><path d="M4 2.500l3.500 3-3.500 3z" fill="#000"/></svg>
<div class="a" style="left:381px;top:180px;width:273px;height:270px;border:1px solid #aca899;background:linear-gradient(to right,#f7f6ee 0%,#efecde 40%,#ebe8d6 100%)"></div>
<div class="a" style="left:382px;top:181px;width:271px;height:18px;background:#c1d2ee"></div>
<div class="a" style="left:382px;top:199px;width:271px;height:1px;background:#b5c4e0"></div>
<div class="t p" style="left:388px;top:184px;font-weight:bold;letter-spacing:0">DetailsView Tasks</div>
<div class="t p" style="left:388px;top:204px;color:#1144cc">Auto Format...</div>
<div class="a" style="left:384px;top:220px;width:267px;height:1px;background:#aca899"></div><div class="a" style="left:384px;top:221px;width:267px;height:1px;background:#fbfaf5"></div>
<div class="t p" style="left:388px;top:228px;">Choose Data Source:</div>
<div class="a" style="left:500px;top:226px;width:151px;height:18px;background:#fff;border:1px solid #aca899"></div>
<div class="t p" style="left:504px;top:228px;">ObjectDataSource1</div>
<div class="a" style="left:634px;top:228px;width:15px;height:14px;border-radius:2px;background:linear-gradient(to bottom,#cfdcf8,#b3c8f4);border:1px solid #b8c8ee"></div>
<svg class="a" style="left:637px;top:232px" width="9" height="6" viewBox="0 0 9 6"><path d="M1 1l3.500 3.500L8 1" fill="none" stroke="#4d6185" stroke-width="2"/></svg>
<div class="a" style="left:384px;top:248px;width:267px;height:1px;background:#aca899"></div><div class="a" style="left:384px;top:249px;width:267px;height:1px;background:#fbfaf5"></div>
<div class="t p" style="left:388px;top:253px;color:#1144cc">Configure Data Source...</div>
<div class="t p" style="left:388px;top:273px;color:#1144cc">Refresh Schema</div>
<div class="a" style="left:384px;top:289px;width:267px;height:1px;background:#aca899"></div><div class="a" style="left:384px;top:290px;width:267px;height:1px;background:#fbfaf5"></div>
<div class="t p" style="left:388px;top:294px;color:#1144cc">Edit Fields...</div>
<div class="t p" style="left:388px;top:314px;color:#1144cc">Add New Field...</div>
<div class="a" style="left:384px;top:330px;width:267px;height:1px;background:#aca899"></div><div class="a" style="left:384px;top:331px;width:267px;height:1px;background:#fbfaf5"></div>
<div class="a" style="left:386px;top:336px;width:13px;height:13px;background:linear-gradient(135deg,#dcdcd6,#fff 80%);border:1px solid #1c5180"></div>
<svg class="a" style="left:388px;top:338px" width="9" height="9" viewBox="0 0 9 9"><path d="M1 4l2.500 2.500L8 1.500" fill="none" stroke="#21a121" stroke-width="1.8"/></svg>
<div class="t p" style="left:404px;top:336px;">Enable Paging</div>
<div class="a" style="left:402px;top:335px;width:71px;height:14px;border:1px dotted #000"></div>
<div class="a" style="left:380px;top:330px;width:100px;height:24px;border:3px solid #ee0a0a;border-radius:8px"></div>
<div class="a" style="left:386px;top:359px;width:13px;height:13px;background:linear-gradient(135deg,#dcdcd6,#fff 80%);border:1px solid #1c5180"></div>
<div class="t p" style="left:404px;top:360px;">Enable Inserting</div>
<div class="a" style="left:386px;top:383px;width:13px;height:13px;background:linear-gradient(135deg,#dcdcd6,#fff 80%);border:1px solid #1c5180"></div>
<div class="t p" style="left:404px;top:384px;">Enable Editing</div>
<div class="a" style="left:386px;top:407px;width:13px;height:13px;background:linear-gradient(135deg,#dcdcd6,#fff 80%);border:1px solid #1c5180"></div>
<div class="t p" style="left:404px;top:408px;">Enable Deleting</div>
<div class="a" style="left:384px;top:427px;width:267px;height:1px;background:#aca899"></div><div class="a" style="left:384px;top:428px;width:267px;height:1px;background:#fbfaf5"></div>
<div class="t p" style="left:388px;top:432px;color:#1144cc">Edit Templates</div>
<!--PAGE_END--></div>
<div class="a" style="left:26px;top:106px;width:1px;height:546px;background:#b4b1a1"></div>
<div class="a" style="left:731px;top:106px;width:1px;height:546px;background:#aca899"></div>
<div class="a" style="left:26px;top:651px;width:706px;height:1px;background:#aca899"></div>
<div class="a" style="left:29px;top:127px;width:1px;height:498px;background:#7d7a6c"></div>
<div class="a" style="left:4px;top:106px;width:22px;height:568px;background:#e7e6d9;z-index:-1"></div>
<div class="a" style="left:26px;top:105px;width:706px;height:1px;background:#aca899"></div>
<!-- scrollbars -->
<div class="a" style="left:711px;top:127px;width:17px;height:481px;background:linear-gradient(to right,#f3f1ec,#fefefb)"></div>
<div class="a" style="left:712px;top:127px;width:16px;height:16px;border:1px solid #fff;border-radius:2px;background:linear-gradient(135deg,#d6e2fc,#b6c9f6);box-shadow:inset 0 0 0 1px #b8c9f3"></div>
<svg class="a" style="left:716px;top:132px" width="8" height="6" viewBox="0 0 8 6"><path d="M1 5l3-3.500 3 3.500" fill="none" stroke="#4d6185" stroke-width="2"/></svg>
<div class="a" style="left:712px;top:144px;width:16px;height:353px;border:1px solid #fff;border-radius:2px;background:linear-gradient(to right,#cbdaff,#bbcdfa 50%,#b0c4f6)"></div>
<svg class="a" style="left:716px;top:317px" width="8" height="8" viewBox="0 0 8 8"><path d="M0 0.500h7M0 2.500h7M0 4.500h7M0 6.500h7" stroke="#eef4fe"/><path d="M1 1.500h7M1 3.500h7M1 5.500h7M1 7.500h7" stroke="#8cb0f8"/></svg>
<div class="a" style="left:712px;top:591px;width:16px;height:17px;border:1px solid #fff;border-radius:2px;background:linear-gradient(135deg,#d6e2fc,#b6c9f6);box-shadow:inset 0 0 0 1px #b8c9f3"></div>
<svg class="a" style="left:716px;top:597px" width="8" height="6" viewBox="0 0 8 6"><path d="M1 1l3 3.500 3-3.500" fill="none" stroke="#4d6185" stroke-width="2"/></svg>
<div class="a" style="left:30px;top:608px;width:681px;height:17px;background:linear-gradient(to bottom,#f3f1ec,#fefefb)"></div>
<div class="a" style="left:711px;top:608px;width:17px;height:17px;background:#ece9d8"></div>
<div class="a" style="left:30px;top:609px;width:16px;height:15px;border:1px solid #fff;border-radius:2px;background:linear-gradient(135deg,#d6e2fc,#b6c9f6);box-shadow:inset 0 0 0 1px #b8c9f3"></div>
<svg class="a" style="left:35px;top:612px" width="6" height="9" viewBox="0 0 6 9"><path d="M5 1l-3.500 3.500 3.500 3.500" fill="none" stroke="#4d6185" stroke-width="2"/></svg>
<div class="a" style="left:47px;top:609px;width:630px;height:15px;border:1px solid #fff;border-radius:2px;background:linear-gradient(to bottom,#cbdaff,#bbcdfa 50%,#b0c4f6)"></div>
<svg class="a" style="left:358px;top:613px" width="8" height="8" viewBox="0 0 8 8"><path d="M0.500 0v7M2.500 0v7M4.500 0v7M6.500 0v7" stroke="#eef4fe"/><path d="M1.500 1v7M3.500 1v7M5.500 1v7M7.500 1v7" stroke="#8cb0f8"/></svg>
<div class="a" style="left:695px;top:609px;width:16px;height:15px;border:1px solid #fff;border-radius:2px;background:linear-gradient(135deg,#d6e2fc,#b6c9f6);box-shadow:inset 0 0 0 1px #b8c9f3"></div>
<svg class="a" style="left:700px;top:612px" width="6" height="9" viewBox="0 0 6 9"><path d="M1 1l3.500 3.500-3.500 3.500" fill="none" stroke="#4d6185" stroke-width="2"/></svg>
<div class="a" style="left:728px;top:127px;width:2px;height:499px;background:#fff"></div>
<div class="a" style="left:29px;top:625px;width:701px;height:1px;background:#fff"></div>
<!-- view bar -->
<div class="a" style="left:27px;top:626px;width:704px;height:25px;background:#ece9d8"></div>
<div class="a" style="left:32px;top:629px;width:65px;height:19px;background:#fff;border:1px solid #316ac5"></div>
<svg class="a" style="left:38px;top:634px" width="10" height="10" viewBox="0 0 10 10"><rect x="0.500" y="0.500" width="7" height="7" fill="#fbfbfd" stroke="#54648a"/><circle cx="6.600" cy="6.600" r="2.500" fill="#1a1a1a"/></svg>
<div class="t" style="left:53px;top:633px">Design</div>
<svg class="a" style="left:103px;top:634px" width="9" height="9" viewBox="0 0 9 9"><rect x="0.5" y="0.5" width="8" height="8" fill="#fff" stroke="#555"/><path d="M3.500 2.500l-2 2 2 2M5.500 2.500l2 2-2 2" fill="none" stroke="#333" stroke-width="0.9"/></svg>
<div class="t" style="left:118px;top:633px">Source</div>
<div class="a" style="left:161px;top:632px;width:1px;height:14px;background:#aca899"></div>
<div class="a" style="left:186px;top:629px;width:10px;height:18px;border:1px solid #aca899;background:#f1efe3"></div>
<svg class="a" style="left:188px;top:636px" width="5" height="7" viewBox="0 0 5 7"><path d="M4.500 0.500v6l-3.500-3z" fill="#aca899"/></svg>
<div class="a" style="left:200px;top:629px;width:45px;height:18px;border:1px solid #aca899;background:#f1efe3"></div><div class="t" style="left:203px;top:633px;letter-spacing:-0.350px">&lt;body&gt;</div>
<div class="a" style="left:249px;top:629px;width:131px;height:18px;border:1px solid #aca899;background:#f1efe3"></div><div class="t" style="left:252px;top:633px;letter-spacing:-0.200px">&lt;asp:content#content1&gt;</div>
<div class="a" style="left:383px;top:629px;width:34px;height:18px;border:1px solid #316ac5;background:#d3def5"></div><div class="t" style="left:386px;top:633px;letter-spacing:-0.350px">&lt;h3&gt;</div>
<div class="a" style="left:709px;top:629px;width:11px;height:18px;border:1px solid #aca899;background:#f1efe3"></div>
<svg class="a" style="left:712px;top:636px" width="5" height="7" viewBox="0 0 5 7"><path d="M0.500 0.500v6l3.500-3z" fill="#aca899"/></svg>
<!-- bottom tool tabs -->
<div class="a" style="left:29px;top:654px;width:68px;height:20px;background:#f3f1e6;border:1px solid #aca899;border-radius:3px 3px 0 0"></div><div class="t" style="left:51px;top:658px;color:#7b7b74;font-size:11px">Error List</div>
<div class="a" style="left:97px;top:654px;width:58px;height:20px;background:#f3f1e6;border:1px solid #aca899;border-radius:3px 3px 0 0"></div><div class="t" style="left:118px;top:658px;color:#7b7b74;font-size:11px">Output</div>
<div class="a" style="left:155px;top:654px;width:91px;height:20px;background:#f3f1e6;border:1px solid #aca899;border-radius:3px 3px 0 0"></div><div class="t" style="left:175px;top:658px;color:#7b7b74;font-size:11px">Find Results 1</div>
<svg class="a" style="left:32px;top:656px" width="16" height="16" viewBox="0 0 16 16"><rect x="1.500" y="2.500" width="10" height="12" fill="#f6f3e8" stroke="#9a9788"/><rect x="4" y="0.500" width="5" height="3.500" fill="#e8c848" stroke="#9a7a20"/><circle cx="10.500" cy="11" r="4.500" fill="#e03a1c"/><path d="M8.500 9l4 4M12.500 9l-4 4" stroke="#fff" stroke-width="1.500"/></svg>
<svg class="a" style="left:100px;top:657px" width="13" height="13" viewBox="0 0 13 13"><rect x="0.500" y="0.500" width="12" height="12" fill="#f4f6fb" stroke="#3b5ea8"/><rect x="1" y="1" width="11" height="2" fill="#4f7bd0"/><path d="M3 5.500h7M3 7.500h7M3 9.500h5" stroke="#5a6a9a"/></svg>
<svg class="a" style="left:157px;top:656px" width="17" height="17" viewBox="0 0 17 17"><rect x="0.500" y="0.500" width="13" height="10" fill="#f4f6fb" stroke="#3b5ea8"/><rect x="1" y="1" width="12" height="2.500" fill="#4f7bd0"/><path d="M3 6h8M3 8h6" stroke="#3a4a7a"/><path d="M8 9h2.500v2h1V9H14l2 6h-3l-.5-2h-1.500l-.5 2H6.500z" fill="#222"/><circle cx="8.500" cy="14.500" r="1.800" fill="#222"/><circle cx="14.500" cy="14.500" r="1.800" fill="#222"/></svg>
<div class="a" style="left:4px;top:674px;width:750px;height:1px;background:#c5c2b2"></div>
<div class="a" style="left:4px;top:675px;width:750px;height:22px;background:linear-gradient(to bottom,#f5f4ec 0,#ece9d8 3px,#ece9d8 100%)"></div>
<div class="t" style="left:13px;top:681px">Ready</div>
<svg class="a" style="left:741px;top:684px" width="12" height="12" viewBox="0 0 12 12"><g fill="#b8b4a0"><rect x="8" y="0" width="2" height="2"/><rect x="4" y="4" width="2" height="2"/><rect x="8" y="4" width="2" height="2"/><rect x="0" y="8" width="2" height="2"/><rect x="4" y="8" width="2" height="2"/><rect x="8" y="8" width="2" height="2"/></g><g fill="#fff"><rect x="9" y="1" width="1" height="1"/><rect x="5" y="5" width="1" height="1"/><rect x="9" y="5" width="1" height="1"/><rect x="1" y="9" width="1" height="1"/><rect x="5" y="9" width="1" height="1"/><rect x="9" y="9" width="1" height="1"/></g></svg>
<!-- right autohide strip -->
<div class="a" style="left:732px;top:105px;width:22px;height:569px;background:#f2f0e6"></div>
<div class="a" style="left:734px;top:108px;width:20px;height:107px;background:#f3f1e7;border:1px solid #aca899;border-right:none;border-radius:3px 0 0 3px"></div>
<div class="t" style="left:749px;top:129px;transform-origin:0 0;transform:rotate(90deg);font-size:11px;color:#5f5f5a">Solution Explorer</div>
<div class="a" style="left:734px;top:214px;width:20px;height:101px;background:#f3f1e7;border:1px solid #aca899;border-right:none;border-radius:3px 0 0 3px"></div>
<div class="t" style="left:749px;top:237px;transform-origin:0 0;transform:rotate(90deg);font-size:11px;color:#5f5f5a">Server Explorer</div>
<div class="a" style="left:734px;top:314px;width:20px;height:78px;background:#f3f1e7;border:1px solid #aca899;border-right:none;border-radius:3px 0 0 3px"></div>
<div class="t" style="left:749px;top:336px;transform-origin:0 0;transform:rotate(90deg);font-size:11px;color:#5f5f5a">Class View</div>
<div class="a" style="left:734px;top:391px;width:20px;height:75px;background:#f3f1e7;border:1px solid #aca899;border-right:none;border-radius:3px 0 0 3px"></div>
<div class="t" style="left:749px;top:412px;transform-origin:0 0;transform:rotate(90deg);font-size:11px;color:#5f5f5a">Properties</div>
<svg class="a" style="left:736px;top:111px" width="16" height="16" viewBox="0 0 16 16"><rect x="5.500" y="4.500" width="10" height="11" fill="#e6ecf8" stroke="#3a5a9a"/><rect x="12.500" y="4.500" width="3" height="11" fill="#4a7ae0"/><path d="M6.200 0.500h6.400v3.500l-1.600 3-4.800-2.500z" fill="#f0b820" stroke="#7a5a10" stroke-width="0.800"/><circle cx="6.400" cy="8.800" r="3" fill="#d8f0fa" stroke="#7a9ac0"/><path d="M4 11.200L0.800 14" stroke="#e0a820" stroke-width="1.800"/></svg>
<svg class="a" style="left:736px;top:217px" width="16" height="17" viewBox="0 0 16 17"><defs><linearGradient id="sb" x1="0" y1="0" x2="1" y2="1"><stop offset="0" stop-color="#4a8af8"/><stop offset="1" stop-color="#1a4ac8"/></linearGradient></defs><rect x="4.200" y="1.500" width="4.600" height="7" fill="#e4e8f4" stroke="#7a8ab0"/><rect x="6" y="3" width="1" height="1" fill="#3ab03a"/><rect x="6" y="4" width="1" height="1" fill="#f0a020"/><rect x="9.500" y="2.500" width="6" height="8" fill="url(#sb)"/><rect x="1.200" y="6.500" width="4.600" height="10" fill="#e4e8f4" stroke="#4a5a88"/><rect x="3" y="8" width="1" height="1" fill="#3ab03a"/><rect x="3" y="9" width="1" height="1" fill="#f0a020"/><path d="M3.500 11v4" stroke="#7a8ab0"/><rect x="6.200" y="7.800" width="6.500" height="7.400" fill="url(#sb)"/></svg>
<svg class="a" style="left:736px;top:316px" width="16" height="17" viewBox="0 0 16 17"><rect x="4.500" y="1.500" width="10" height="13" fill="#f4f8ff" stroke="#4a6ab8"/><path d="M12.500 2v12" stroke="#6a9af0" stroke-width="2"/><path d="M4.500 9.500h4.500v5" fill="none" stroke="#9aa8c8"/><path d="M10.500 2.500l4.800 4-3.300 3.800-4.800-4z" fill="#f0b820" stroke="#b8860a" stroke-width="0.600"/><path d="M2.800 11.200l2.600 2.600-2.600 2.600-2.600-2.600z" fill="#4a9ae8" stroke="#1a4aa8" stroke-width="0.600"/><path d="M9 11.200l2.800 2.600L9 16.400l-2.800-2.600z" fill="#e060d8" stroke="#a030a0" stroke-width="0.600"/></svg>
<svg class="a" style="left:737px;top:394px" width="15" height="16" viewBox="0 0 15 16"><rect x="0.500" y="0.500" width="10" height="11" fill="#e8f0ff" stroke="#3a4a6a"/><rect x="8" y="0.500" width="2.500" height="3" fill="#6a9af0"/><path d="M2.500 2v1.500M4.500 2v1.500M2.500 5v5M4.500 5v5" stroke="#7a9ad0" stroke-width="1"/><path d="M7 3l3.500 3 3-2 .500 7-1 3h-4.500l-1.500-5z" fill="#f0c030" stroke="#a8800a" stroke-width="0.600"/><path d="M7 15.500h7" stroke="#2a9a2a" stroke-width="1.200"/></svg>
</body></html>
